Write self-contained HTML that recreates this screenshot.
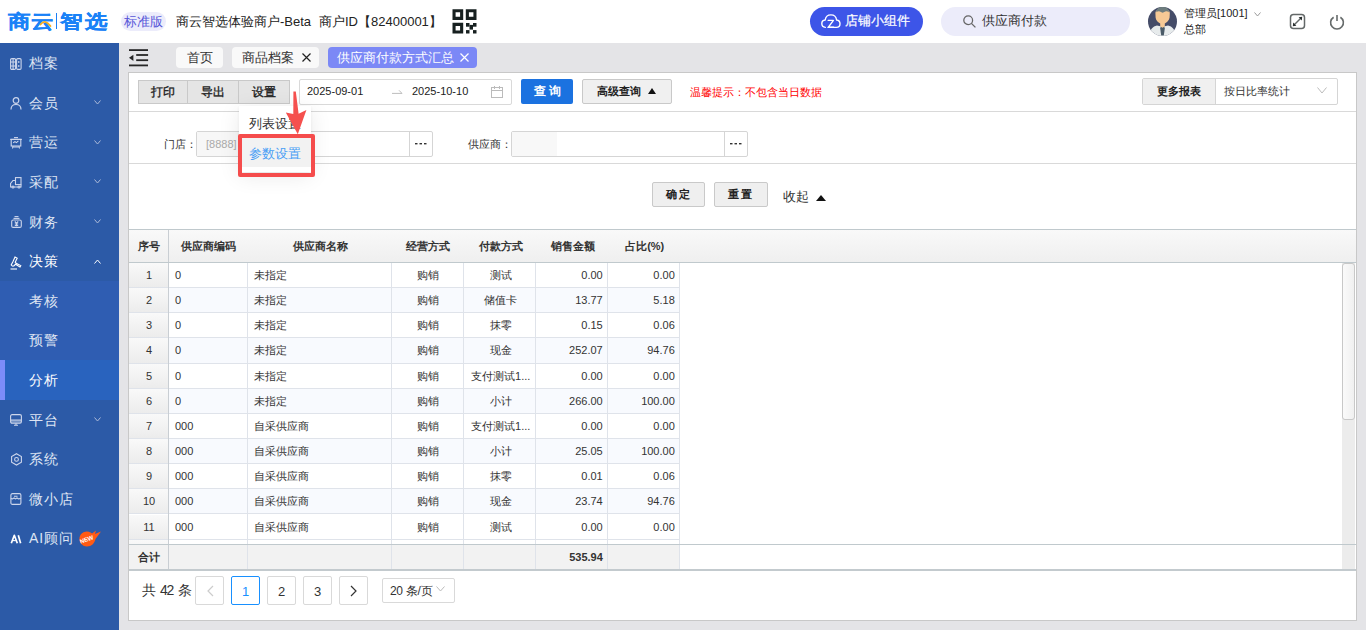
<!DOCTYPE html>
<html><head><meta charset="utf-8">
<style>
*{box-sizing:border-box;margin:0;padding:0}
html,body{width:1366px;height:630px;overflow:hidden;background:#e4e4e7;font-family:"Liberation Sans",sans-serif;color:#333}
.abs{position:absolute}
.logo{top:8.5px;font-size:22px;font-weight:bold;-webkit-text-stroke:0.3px #1a82f7;color:#1a82f7;line-height:30px;transform:scale(1.02,0.86);transform-origin:0 0}
#hdr{position:absolute;left:0;top:0;width:1366px;height:43px;background:#fff}
#side{position:absolute;left:0;top:43px;width:119px;height:587px;background:#2c5aa7}
.mi{position:absolute;left:0;width:119px;height:39.67px;color:#dfe5f3;font-size:14px}
.mi .t{position:absolute;left:29px;top:11.3px;line-height:18px;font-size:14px;letter-spacing:1px}
.mi .ic{position:absolute;left:10px;top:14px;width:12px;height:12px}
.mi .chev{position:absolute;left:94px;top:15px;width:7px;height:5px}
#panel{position:absolute;left:128px;top:72px;width:1229px;height:549px;background:#fff;border:1px solid #c8c8c8}
.tab{position:absolute;top:47px;height:21px;background:#f9f9f9;border-radius:4px;font-size:13px;line-height:21px;color:#333}
.btn{position:absolute;background:#efefef;border:1px solid #c9c9c9;font-size:12px;font-weight:bold;text-align:center;color:#222}
.sep{position:absolute;left:129px;width:1227px;height:1px;background:#d9d9d9}
.th{position:absolute;top:230px;height:32px;line-height:32px;text-align:center;font-size:11px;font-weight:bold;color:#333}
.td{position:absolute;height:24px;line-height:25px;font-size:11px;color:#333;white-space:nowrap;overflow:hidden}
.pg{position:absolute;top:576px;width:29px;height:29px;border:1px solid #d9d9d9;border-radius:2px;text-align:center;line-height:27px;font-size:13px;color:#333;display:flex;align-items:center;justify-content:center;padding-top:1px}
</style></head><body>
<div id="hdr">
  <div class="abs logo" style="left:8px">商</div><div class="abs logo" style="left:31px">云</div>
  <div class="abs" style="left:56px;top:13px;width:1px;height:16px;background:#1a7ff5"></div>
  <svg class="abs" style="left:39px;top:20px" width="13" height="8" viewBox="0 0 13 8"><path d="M1.5 4.6C3 2.6 4.6 1.6 6.4 2C8.2 2.4 9.6 3.6 11.5 6" fill="none" stroke="#f5ad1f" stroke-width="1.7" stroke-linecap="round"/></svg><div class="abs logo" style="left:60px">智</div><div class="abs logo" style="left:85px">选</div>
  <div class="abs" style="left:121px;top:12px;width:45px;height:19px;border-radius:10px;background:#ececfb;color:#5656d8;font-size:13px;line-height:19px;text-align:center">标准版</div>
  <div class="abs" style="left:176px;top:12px;font-size:13px;line-height:19px;color:#222">商云智选体验商户-Beta</div>
  <div class="abs" style="left:319px;top:12px;font-size:13px;line-height:19px;color:#222">商户ID【82400001】</div>
  <svg class="abs" style="left:452px;top:9px" width="25" height="25" viewBox="0 0 25 25"><g fill="#172020" fill-rule="evenodd"><path d="M0.5 0.2h10.7v10.7H0.5zM3.6 3.3v4.5h4.5V3.3z"/><path d="M13.8 0.2h10.7v10.7H13.8zM16.9 3.3v4.5h4.5V3.3z"/><path d="M0.5 13.8h10.7v10.7H0.5zM3.6 16.9v4.5h4.5v-4.5z"/><rect x="14" y="14" width="3.5" height="3.7"/><rect x="21" y="14" width="3.5" height="3.7"/><rect x="17.5" y="15.9" width="3.5" height="4.7"/><rect x="14" y="21.1" width="3.5" height="3.4"/><rect x="21" y="21.1" width="3.5" height="3.4"/></g></svg>
  <div class="abs" style="left:810px;top:7px;width:113px;height:29px;border-radius:15px;background:#3d55e8"></div>
  <div class="abs" style="left:845px;top:11px;font-size:13px;line-height:20px;color:#fff;-webkit-text-stroke:0.2px #fff">店铺小组件</div>
  <div class="abs" style="left:941px;top:7px;width:189px;height:29px;border-radius:15px;background:#ececfa"></div>
  <div class="abs" style="left:982px;top:11px;font-size:13px;line-height:20px;color:#333">供应商付款</div>

  <svg class="abs" style="left:821px;top:14px" width="20" height="15" viewBox="0 0 20 15"><g fill="none" stroke="#fff" stroke-width="1.4" stroke-linecap="round" stroke-linejoin="round"><path d="M4.3 13.4C2 13.2 0.8 11.6 0.8 9.6C0.8 7.6 2.2 6.2 4.2 6C4.6 3 6.9 0.9 9.9 0.9C12.9 0.9 15.2 3 15.6 6C17.6 6.2 19 7.7 19 9.7C19 11.8 17.6 13.4 15.4 13.4H7"/><path d="M7.2 6.4H12.4L7.4 13.2H12.6"/></g></svg>
  <svg class="abs" style="left:963px;top:15px" width="13" height="13" viewBox="0 0 13 13"><g fill="none" stroke="#666" stroke-width="1.3"><circle cx="5.2" cy="5.2" r="4.4"/><path d="M8.4 8.4L12.4 12.4"/></g></svg>
  <svg class="abs" style="left:1148px;top:7px" width="29" height="29" viewBox="0 0 29 29"><defs><clipPath id="av"><circle cx="14.5" cy="14.5" r="14.5"/></clipPath></defs><g clip-path="url(#av)"><rect width="29" height="29" fill="#454c68"/><path d="M1 30C2 22.5 4.5 19.5 9 18.6L14.5 19.8L20 18.6C24.5 19.5 27 22.5 28 30z" fill="#e7ebec"/><path d="M12.8 19.5h3.4l0.6 2l-1 7h-2.6l-1-7z" fill="#4b5b68"/><path d="M7.4 6C7.6 3.2 10.5 1.8 14.6 1.8S21.6 3.2 21.8 6L21.6 10.5C21.2 13.5 18.8 15.5 16.8 16.5V19.6L14.5 20.8L12.2 19.6V16.5C10.2 15.5 7.8 13.5 7.6 10.5z" fill="#f6c995"/><path d="M8.2 5.2C8.5 1.5 11 -0.5 14.6 -0.5S20.7 1.5 21 5.2C19.5 4 17.5 3.8 16.3 4.9L14.6 5.8L12.9 4.9C11.7 3.8 9.7 4 8.2 5.2z" fill="#6e7d7e"/></g></svg>
  <svg class="abs" style="left:1254px;top:12px" width="7" height="5" viewBox="0 0 7 5"><path d="M0.5 0.5L3.5 4L6.5 0.5" fill="none" stroke="#999" stroke-width="1"/></svg>
  <svg class="abs" style="left:1289px;top:13px" width="17" height="17" viewBox="0 0 17 17"><g fill="none" stroke="#636868" stroke-width="1.5"><rect x="1.5" y="1.5" width="14" height="14" rx="3"/><path d="M5 12L12 5"/></g><path d="M3.8 13.2L4.2 9.6L7.4 12.8z M13.2 3.8L12.8 7.4L9.6 4.2z" fill="#2a3030"/></svg>
  <svg class="abs" style="left:1329px;top:14px" width="16" height="16" viewBox="0 0 16 16"><g fill="none" stroke="#666b6b" stroke-width="1.6"><path d="M4.6 3.2A6.4 6.4 0 1 0 11.4 3.2"/><path d="M8 1v6"/></g></svg>
  <div class="abs" style="left:1184px;top:6px;font-size:11px;line-height:14px;color:#222">管理员[1001]</div>
  <div class="abs" style="left:1184px;top:22px;font-size:11px;line-height:14px;color:#222">总部</div>
</div>
<div id="side">
  <div class="mi" style="top:0.00px"><span class="t">档案</span></div>
  <div class="mi" style="top:39.60px"><span class="t">会员</span></div>
  <div class="mi" style="top:79.20px"><span class="t">营运</span></div>
  <div class="mi" style="top:118.80px"><span class="t">采配</span></div>
  <div class="mi" style="top:158.40px"><span class="t">财务</span></div>
  <div class="mi" style="top:198.00px;color:#fff"><span class="t">决策</span></div>
  <div class="abs" style="left:0;top:238px;width:119px;height:119px;background:#2f5db2"></div>
  <div class="mi" style="top:237.60px"><span class="t">考核</span></div>
  <div class="mi" style="top:277.20px"><span class="t">预警</span></div>
  <div class="abs" style="left:0;top:317px;width:119px;height:40px;background:#2963be"></div>
  <div class="abs" style="left:0;top:317px;width:5px;height:40px;background:#7c8cf8"></div>
  <div class="mi" style="top:316.80px;color:#fff"><span class="t">分析</span></div>
  <div class="mi" style="top:356.40px"><span class="t">平台</span></div>
  <div class="mi" style="top:396.00px"><span class="t">系统</span></div>
  <div class="mi" style="top:435.60px"><span class="t">微小店</span></div>
  <div class="mi" style="top:475.20px"><span class="t">AI顾问</span></div>

<svg class="abs" style="left:10px;top:14.5px" width="12" height="12" viewBox="0 0 12 12"><g fill="none" stroke="#cdd6ec" stroke-width="1.1"><rect x="0.6" y="0.6" width="5" height="10.8" rx="1.2"/><rect x="6.6" y="0.6" width="4.5" height="10.8" rx="1.2"/><path d="M3.1 1v10M0.6 4h5M0.6 8h5M8.8 3v2M8.8 7v2"/></g></svg>
<svg class="abs" style="left:10px;top:54px" width="12" height="13" viewBox="0 0 12 13"><g fill="none" stroke="#cdd6ec" stroke-width="1.2"><circle cx="6" cy="3.5" r="2.8"/><path d="M1 12.5C1 9.3 3.2 7.5 6 7.5S11 9.3 11 12.5"/></g></svg>
<svg class="abs" style="left:10px;top:94px" width="12" height="12" viewBox="0 0 12 12"><g fill="none" stroke="#cdd6ec" stroke-width="1.1"><path d="M4 0.6h4"/><path d="M0.2 2.4h11.6"/><rect x="1.2" y="2.4" width="9.6" height="6.6"/><path d="M3.2 5.8L5 4.6L6.4 5.6L8.4 3.8"/><path d="M2.5 11.5L3 9M9.5 11.5L9 9M3 10h6"/></g></svg>
<svg class="abs" style="left:10px;top:133.5px" width="12" height="12" viewBox="0 0 12 12"><g fill="none" stroke="#cdd6ec" stroke-width="1.1"><rect x="5.5" y="0.6" width="5.5" height="7"/><path d="M5.5 3.5H3L0.6 6.5V10h1.5M4 10h4M10 10h1V7.6"/><circle cx="3" cy="10" r="1"/><circle cx="9" cy="10" r="1"/></g></svg>
<svg class="abs" style="left:10.5px;top:173px" width="11" height="12" viewBox="0 0 11 12"><g fill="none" stroke="#cdd6ec" stroke-width="1.1"><path d="M3.5 0.6h4"/><path d="M2.5 2.4h6"/><rect x="0.7" y="4" width="9.6" height="7.4" rx="1.5"/><path d="M3.8 5.5L5.5 7.3L7.2 5.5M5.5 7.3v3M3.8 8h3.4M3.8 9.5h3.4"/></g></svg>
<svg class="abs" style="left:10px;top:212.5px" width="12" height="14" viewBox="0 0 12 14"><g fill="none" stroke="#fff" stroke-width="1.1"><path d="M5 1L7.2 2.2L5.2 6.2L6.2 7.2L10.8 9.6L10 11L5.5 8.3L4 9.7C3 10.4 2 10 1.2 9L3 5.5z"/><path d="M0.5 13h6.5"/></g></svg>
<svg class="abs" style="left:10px;top:371px" width="12" height="12" viewBox="0 0 12 12"><g fill="none" stroke="#cdd6ec" stroke-width="1.1"><rect x="0.6" y="0.6" width="10.8" height="8.6" rx="1.5"/><path d="M1 6h10M4 11.2h4M6 9.2v2"/></g><rect x="1" y="6" width="10" height="3" fill="#cdd6ec" opacity="0.45"/></svg>
<svg class="abs" style="left:10.5px;top:409.5px" width="12" height="13" viewBox="0 0 12 13"><g fill="none" stroke="#cdd6ec" stroke-width="1.1"><path d="M5.5 0.7L10.4 3.5V9.3L5.5 12.1L0.6 9.3V3.5z"/><circle cx="5.5" cy="6.4" r="1.9"/></g></svg>
<svg class="abs" style="left:10px;top:450px" width="12" height="12" viewBox="0 0 12 12"><g fill="none" stroke="#cdd6ec" stroke-width="1.1"><rect x="0.9" y="0.6" width="10" height="10.8" rx="1.5"/><path d="M4 3.2h3.5M0.8 5.5L2.5 5.9L4 5L5.5 5.9L7 5L8.5 5.9L11 5.5"/></g></svg>
<svg class="abs" style="left:10px;top:491px" width="12" height="10" viewBox="0 0 12 10"><g fill="none" stroke="#fff" stroke-width="1.7" stroke-linejoin="round"><path d="M1.3 9.2L4.3 1.3L7.3 9.2"/><path d="M8.3 1.3L10.6 9.2"/></g><path d="M2.8 6.6H5.8" stroke="#fff" stroke-width="1.1"/></svg>
<svg class="abs" style="left:78.5px;top:486.5px" width="23" height="17" viewBox="0 0 23 17"><path d="M8 16.5A7.5 7.5 0 1 1 13 3.5L17 0.5L16 4L22 1.5L16.5 9C15.5 13.5 12.5 16.5 8 16.5z" fill="#ff5a14"/><text x="7.5" y="11.5" font-size="6" font-weight="bold" fill="#fff" text-anchor="middle" transform="rotate(-20 7.5 9)" font-family="Liberation Sans">NEW</text></svg>
<svg class="abs" style="left:94px;top:57px" width="7" height="5" viewBox="0 0 7 5"><path d="M0.5 0.5L3.5 4L6.5 0.5" fill="none" stroke="#aab8d8" stroke-width="1"/></svg><svg class="abs" style="left:94px;top:97px" width="7" height="5" viewBox="0 0 7 5"><path d="M0.5 0.5L3.5 4L6.5 0.5" fill="none" stroke="#aab8d8" stroke-width="1"/></svg><svg class="abs" style="left:94px;top:136px" width="7" height="5" viewBox="0 0 7 5"><path d="M0.5 0.5L3.5 4L6.5 0.5" fill="none" stroke="#aab8d8" stroke-width="1"/></svg><svg class="abs" style="left:94px;top:176px" width="7" height="5" viewBox="0 0 7 5"><path d="M0.5 0.5L3.5 4L6.5 0.5" fill="none" stroke="#aab8d8" stroke-width="1"/></svg><svg class="abs" style="left:94px;top:216px" width="7" height="5" viewBox="0 0 7 5"><path d="M0.5 4.5L3.5 1L6.5 4.5" fill="none" stroke="#fff" stroke-width="1"/></svg><svg class="abs" style="left:94px;top:374px" width="7" height="5" viewBox="0 0 7 5"><path d="M0.5 0.5L3.5 4L6.5 0.5" fill="none" stroke="#aab8d8" stroke-width="1"/></svg>
</div>
<div class="tab" style="left:176px;width:47px;text-align:center">首页</div>
<div class="tab" style="left:232px;width:87px;padding-left:10px">商品档案<svg style="position:absolute;right:8px;top:6px" width="9" height="9" viewBox="0 0 9 9"><path d="M0.5 0.5L8.5 8.5M8.5 0.5L0.5 8.5" stroke="#222" stroke-width="1.2"/></svg></div>
<div class="tab" style="left:328px;width:149px;padding-left:9px;background:#7b88f6;color:#fff">供应商付款方式汇总<svg style="position:absolute;right:8px;top:6px" width="9" height="9" viewBox="0 0 9 9"><path d="M0.5 0.5L8.5 8.5M8.5 0.5L0.5 8.5" stroke="#fff" stroke-width="1.2"/></svg></div>
<div id="panel"></div>
<!-- toolbar -->
<div class="abs" style="left:129px;top:48px;width:20px;height:19px">
 <svg width="20" height="19" viewBox="0 0 20 19"><g fill="#262626"><rect x="0" y="1.2" width="19" height="1.8"/><rect x="7.2" y="6.1" width="11.9" height="1.8"/><rect x="7.2" y="11.3" width="11.9" height="1.8"/><rect x="0" y="16.5" width="19" height="1.8"/><path d="M0 9.8L4.4 6.7V13z"/></g></svg>
</div>
<div class="btn" style="left:138px;top:80px;width:50px;height:24px;line-height:22px;background:#e5e5e5;font-size:11.5px;font-weight:normal;-webkit-text-stroke:0.35px #222">打印</div>
<div class="btn" style="left:187px;top:80px;width:52px;height:24px;line-height:22px;background:#e5e5e5;font-size:11.5px;font-weight:normal;-webkit-text-stroke:0.35px #222">导出</div>
<div class="btn" style="left:238px;top:80px;width:52px;height:24px;line-height:22px;background:#e5e5e5;font-size:11.5px;font-weight:normal;-webkit-text-stroke:0.35px #222">设置</div>
<div class="abs" style="left:299px;top:79px;width:213px;height:26px;border:1px solid #d9d9d9;border-radius:2px;background:#fff"></div>
<div class="abs" style="left:307px;top:85px;font-size:11px;line-height:13px;color:#222">2025-09-01</div>
<svg class="abs" style="left:391px;top:89px" width="12" height="6" viewBox="0 0 12 6"><path d="M1 4.4H11L8 1.3" fill="none" stroke="#bdbdbd" stroke-width="1"/></svg>
<div class="abs" style="left:412px;top:85px;font-size:11px;line-height:13px;color:#222">2025-10-10</div>
<svg class="abs" style="left:491px;top:86px" width="12" height="12" viewBox="0 0 12 12"><g fill="none" stroke="#bbb" stroke-width="1"><rect x="0.5" y="1.5" width="11" height="10"/><path d="M0.5 4.5h11M3.5 0v3M8.5 0v3"/></g></svg>
<div class="abs" style="left:521px;top:79px;width:52px;height:25px;background:#1b72e0;border-radius:2px;color:#fff;font-size:12px;font-weight:bold;line-height:25px;text-align:center;letter-spacing:3px;padding-left:3px">查询</div>
<div class="btn" style="left:582px;top:79px;width:90px;height:25px;line-height:23px;text-align:left;padding-left:14px;font-size:11px;border-radius:2px;background:#f0f0f0">高级查询</div>
<svg class="abs" style="left:648px;top:88px" width="8" height="6" viewBox="0 0 8 6"><path d="M0 6L4 0L8 6z" fill="#111"/></svg>
<div class="abs" style="left:690px;top:85px;font-size:11px;line-height:14px;color:#f00">温馨提示：不包含当日数据</div>
<div class="abs" style="left:1142px;top:78px;width:196px;height:27px;border:1px solid #d5d5d5;border-radius:2px;background:#fff"></div>
<div class="abs" style="left:1143px;top:79px;width:73px;height:25px;background:#f0f0f0;border-right:1px solid #d5d5d5"></div>
<div class="abs" style="left:1157px;top:84px;font-size:11px;font-weight:bold;line-height:14px;color:#222">更多报表</div>
<div class="abs" style="left:1224px;top:84px;font-size:11px;line-height:14px;color:#333">按日比率统计</div>
<svg class="abs" style="left:1317px;top:87px" width="10" height="7" viewBox="0 0 10 7"><path d="M0.5 0.5L5 6L9.5 0.5" fill="none" stroke="#bbb" stroke-width="1"/></svg>
<div class="sep" style="top:111px"></div>
<!-- filter row -->
<div class="abs" style="left:164px;top:137px;font-size:11px;line-height:14px;color:#333">门店：</div>
<div class="abs" style="left:196px;top:131px;width:237px;height:26px;border:1px solid #d5d5d5;border-radius:2px;background:#fff"></div>
<div class="abs" style="left:197px;top:132px;width:46px;height:24px;background:#f7f7f7"></div>
<div class="abs" style="left:409px;top:132px;width:1px;height:24px;background:#d5d5d5"></div>
<div class="abs" style="left:206px;top:137px;font-size:11px;line-height:14px;color:#aaa">[8888]</div>
<svg class="abs" style="left:415px;top:143px" width="12" height="2" viewBox="0 0 12 2"><g fill="#333"><rect x="0" y="0" width="2.5" height="1.4"/><rect x="4.5" y="0" width="2.5" height="1.4"/><rect x="9" y="0" width="2.5" height="1.4"/></g></svg>
<div class="abs" style="left:468px;top:137px;font-size:11px;line-height:14px;color:#333">供应商：</div>
<div class="abs" style="left:511px;top:131px;width:237px;height:26px;border:1px solid #d5d5d5;border-radius:2px;background:#fff"></div>
<div class="abs" style="left:512px;top:132px;width:45px;height:24px;background:#f8f8f8"></div>
<div class="abs" style="left:724px;top:132px;width:1px;height:24px;background:#d5d5d5"></div>
<svg class="abs" style="left:730px;top:143px" width="12" height="2" viewBox="0 0 12 2"><g fill="#333"><rect x="0" y="0" width="2.5" height="1.4"/><rect x="4.5" y="0" width="2.5" height="1.4"/><rect x="9" y="0" width="2.5" height="1.4"/></g></svg>
<div class="sep" style="top:163px"></div>
<div class="btn" style="left:652px;top:182px;width:53px;height:25px;line-height:23px;font-size:11px;border-radius:2px;letter-spacing:2px">确定</div>
<div class="btn" style="left:714px;top:182px;width:54px;height:25px;line-height:23px;font-size:11px;border-radius:2px;letter-spacing:2px">重置</div>
<div class="abs" style="left:783px;top:188px;font-size:13px;line-height:17px;color:#333">收起</div>
<svg class="abs" style="left:816px;top:195px" width="10" height="6" viewBox="0 0 10 6"><path d="M0 6L5 0L10 6z" fill="#111"/></svg>
<!-- table start -->
<!-- table start -->
<!-- table start -->
<!-- table start -->
<!-- table start -->
<!-- table start -->
<div class="abs" style="left:129px;top:229px;width:1227px;height:34px;background:linear-gradient(#f9f9f9,#efefef);border-top:1px solid #c0c9cd;border-bottom:1px solid #c0c9cd"></div>
<div class="abs" style="left:168px;top:230px;width:1px;height:32px;background:#c9ced3"></div>
<div class="th" style="left:129px;width:39.0px;padding-left:1px">序号</div>
<div class="th" style="left:168px;width:79.0px;padding-left:2px">供应商编码</div>
<div class="th" style="left:247px;width:144.0px;padding-left:2px">供应商名称</div>
<div class="th" style="left:391px;width:72.6px;padding-left:2px">经营方式</div>
<div class="th" style="left:463.6px;width:72.2px;padding-left:2px">付款方式</div>
<div class="th" style="left:535.8px;width:71.9px;padding-left:2px">销售金额</div>
<div class="th" style="left:607.7px;width:72.1px;padding-left:2px">占比(%)</div>
<div class="abs" style="left:129px;top:263px;width:1227px;height:281px;overflow:hidden">
<div class="abs" style="left:0;top:0.00px;width:550.8px;height:25.15px;background:#fff;border-bottom:1px solid #dfe3ea"></div>
<div class="abs" style="left:0;top:0.00px;width:39px;height:24.15px;background:linear-gradient(#f9f9f9,#ececec)"></div>
<div class="td" style="left:0.0px;top:0.00px;width:39.0px;text-align:center;padding-left:1px;">1</div>
<div class="td" style="left:39.0px;top:0.00px;width:79.0px;text-align:left;padding-left:7px;">0</div>
<div class="td" style="left:118.0px;top:0.00px;width:144.0px;text-align:left;padding-left:7px;">未指定</div>
<div class="td" style="left:262.0px;top:0.00px;width:72.6px;text-align:center;padding-left:2px;">购销</div>
<div class="td" style="left:334.6px;top:0.00px;width:72.2px;text-align:center;padding-left:2px;">测试</div>
<div class="td" style="left:406.8px;top:0.00px;width:71.9px;text-align:right;padding-right:5px;">0.00</div>
<div class="td" style="left:478.7px;top:0.00px;width:72.1px;text-align:right;padding-right:5px;">0.00</div>
<div class="abs" style="left:0;top:25.15px;width:550.8px;height:25.15px;background:#f8fafe;border-bottom:1px solid #dfe3ea"></div>
<div class="abs" style="left:0;top:25.15px;width:39px;height:24.15px;background:linear-gradient(#f9f9f9,#ececec)"></div>
<div class="td" style="left:0.0px;top:25.15px;width:39.0px;text-align:center;padding-left:1px;">2</div>
<div class="td" style="left:39.0px;top:25.15px;width:79.0px;text-align:left;padding-left:7px;">0</div>
<div class="td" style="left:118.0px;top:25.15px;width:144.0px;text-align:left;padding-left:7px;">未指定</div>
<div class="td" style="left:262.0px;top:25.15px;width:72.6px;text-align:center;padding-left:2px;">购销</div>
<div class="td" style="left:334.6px;top:25.15px;width:72.2px;text-align:center;padding-left:2px;">储值卡</div>
<div class="td" style="left:406.8px;top:25.15px;width:71.9px;text-align:right;padding-right:5px;">13.77</div>
<div class="td" style="left:478.7px;top:25.15px;width:72.1px;text-align:right;padding-right:5px;">5.18</div>
<div class="abs" style="left:0;top:50.30px;width:550.8px;height:25.15px;background:#fff;border-bottom:1px solid #dfe3ea"></div>
<div class="abs" style="left:0;top:50.30px;width:39px;height:24.15px;background:linear-gradient(#f9f9f9,#ececec)"></div>
<div class="td" style="left:0.0px;top:50.30px;width:39.0px;text-align:center;padding-left:1px;">3</div>
<div class="td" style="left:39.0px;top:50.30px;width:79.0px;text-align:left;padding-left:7px;">0</div>
<div class="td" style="left:118.0px;top:50.30px;width:144.0px;text-align:left;padding-left:7px;">未指定</div>
<div class="td" style="left:262.0px;top:50.30px;width:72.6px;text-align:center;padding-left:2px;">购销</div>
<div class="td" style="left:334.6px;top:50.30px;width:72.2px;text-align:center;padding-left:2px;">抹零</div>
<div class="td" style="left:406.8px;top:50.30px;width:71.9px;text-align:right;padding-right:5px;">0.15</div>
<div class="td" style="left:478.7px;top:50.30px;width:72.1px;text-align:right;padding-right:5px;">0.06</div>
<div class="abs" style="left:0;top:75.45px;width:550.8px;height:25.15px;background:#f8fafe;border-bottom:1px solid #dfe3ea"></div>
<div class="abs" style="left:0;top:75.45px;width:39px;height:24.15px;background:linear-gradient(#f9f9f9,#ececec)"></div>
<div class="td" style="left:0.0px;top:75.45px;width:39.0px;text-align:center;padding-left:1px;">4</div>
<div class="td" style="left:39.0px;top:75.45px;width:79.0px;text-align:left;padding-left:7px;">0</div>
<div class="td" style="left:118.0px;top:75.45px;width:144.0px;text-align:left;padding-left:7px;">未指定</div>
<div class="td" style="left:262.0px;top:75.45px;width:72.6px;text-align:center;padding-left:2px;">购销</div>
<div class="td" style="left:334.6px;top:75.45px;width:72.2px;text-align:center;padding-left:2px;">现金</div>
<div class="td" style="left:406.8px;top:75.45px;width:71.9px;text-align:right;padding-right:5px;">252.07</div>
<div class="td" style="left:478.7px;top:75.45px;width:72.1px;text-align:right;padding-right:5px;">94.76</div>
<div class="abs" style="left:0;top:100.60px;width:550.8px;height:25.15px;background:#fff;border-bottom:1px solid #dfe3ea"></div>
<div class="abs" style="left:0;top:100.60px;width:39px;height:24.15px;background:linear-gradient(#f9f9f9,#ececec)"></div>
<div class="td" style="left:0.0px;top:100.60px;width:39.0px;text-align:center;padding-left:1px;">5</div>
<div class="td" style="left:39.0px;top:100.60px;width:79.0px;text-align:left;padding-left:7px;">0</div>
<div class="td" style="left:118.0px;top:100.60px;width:144.0px;text-align:left;padding-left:7px;">未指定</div>
<div class="td" style="left:262.0px;top:100.60px;width:72.6px;text-align:center;padding-left:2px;">购销</div>
<div class="td" style="left:334.6px;top:100.60px;width:72.2px;text-align:center;padding-left:2px;">支付测试1...</div>
<div class="td" style="left:406.8px;top:100.60px;width:71.9px;text-align:right;padding-right:5px;">0.00</div>
<div class="td" style="left:478.7px;top:100.60px;width:72.1px;text-align:right;padding-right:5px;">0.00</div>
<div class="abs" style="left:0;top:125.75px;width:550.8px;height:25.15px;background:#f8fafe;border-bottom:1px solid #dfe3ea"></div>
<div class="abs" style="left:0;top:125.75px;width:39px;height:24.15px;background:linear-gradient(#f9f9f9,#ececec)"></div>
<div class="td" style="left:0.0px;top:125.75px;width:39.0px;text-align:center;padding-left:1px;">6</div>
<div class="td" style="left:39.0px;top:125.75px;width:79.0px;text-align:left;padding-left:7px;">0</div>
<div class="td" style="left:118.0px;top:125.75px;width:144.0px;text-align:left;padding-left:7px;">未指定</div>
<div class="td" style="left:262.0px;top:125.75px;width:72.6px;text-align:center;padding-left:2px;">购销</div>
<div class="td" style="left:334.6px;top:125.75px;width:72.2px;text-align:center;padding-left:2px;">小计</div>
<div class="td" style="left:406.8px;top:125.75px;width:71.9px;text-align:right;padding-right:5px;">266.00</div>
<div class="td" style="left:478.7px;top:125.75px;width:72.1px;text-align:right;padding-right:5px;">100.00</div>
<div class="abs" style="left:0;top:150.90px;width:550.8px;height:25.15px;background:#fff;border-bottom:1px solid #dfe3ea"></div>
<div class="abs" style="left:0;top:150.90px;width:39px;height:24.15px;background:linear-gradient(#f9f9f9,#ececec)"></div>
<div class="td" style="left:0.0px;top:150.90px;width:39.0px;text-align:center;padding-left:1px;">7</div>
<div class="td" style="left:39.0px;top:150.90px;width:79.0px;text-align:left;padding-left:7px;">000</div>
<div class="td" style="left:118.0px;top:150.90px;width:144.0px;text-align:left;padding-left:7px;">自采供应商</div>
<div class="td" style="left:262.0px;top:150.90px;width:72.6px;text-align:center;padding-left:2px;">购销</div>
<div class="td" style="left:334.6px;top:150.90px;width:72.2px;text-align:center;padding-left:2px;">支付测试1...</div>
<div class="td" style="left:406.8px;top:150.90px;width:71.9px;text-align:right;padding-right:5px;">0.00</div>
<div class="td" style="left:478.7px;top:150.90px;width:72.1px;text-align:right;padding-right:5px;">0.00</div>
<div class="abs" style="left:0;top:176.05px;width:550.8px;height:25.15px;background:#f8fafe;border-bottom:1px solid #dfe3ea"></div>
<div class="abs" style="left:0;top:176.05px;width:39px;height:24.15px;background:linear-gradient(#f9f9f9,#ececec)"></div>
<div class="td" style="left:0.0px;top:176.05px;width:39.0px;text-align:center;padding-left:1px;">8</div>
<div class="td" style="left:39.0px;top:176.05px;width:79.0px;text-align:left;padding-left:7px;">000</div>
<div class="td" style="left:118.0px;top:176.05px;width:144.0px;text-align:left;padding-left:7px;">自采供应商</div>
<div class="td" style="left:262.0px;top:176.05px;width:72.6px;text-align:center;padding-left:2px;">购销</div>
<div class="td" style="left:334.6px;top:176.05px;width:72.2px;text-align:center;padding-left:2px;">小计</div>
<div class="td" style="left:406.8px;top:176.05px;width:71.9px;text-align:right;padding-right:5px;">25.05</div>
<div class="td" style="left:478.7px;top:176.05px;width:72.1px;text-align:right;padding-right:5px;">100.00</div>
<div class="abs" style="left:0;top:201.20px;width:550.8px;height:25.15px;background:#fff;border-bottom:1px solid #dfe3ea"></div>
<div class="abs" style="left:0;top:201.20px;width:39px;height:24.15px;background:linear-gradient(#f9f9f9,#ececec)"></div>
<div class="td" style="left:0.0px;top:201.20px;width:39.0px;text-align:center;padding-left:1px;">9</div>
<div class="td" style="left:39.0px;top:201.20px;width:79.0px;text-align:left;padding-left:7px;">000</div>
<div class="td" style="left:118.0px;top:201.20px;width:144.0px;text-align:left;padding-left:7px;">自采供应商</div>
<div class="td" style="left:262.0px;top:201.20px;width:72.6px;text-align:center;padding-left:2px;">购销</div>
<div class="td" style="left:334.6px;top:201.20px;width:72.2px;text-align:center;padding-left:2px;">抹零</div>
<div class="td" style="left:406.8px;top:201.20px;width:71.9px;text-align:right;padding-right:5px;">0.01</div>
<div class="td" style="left:478.7px;top:201.20px;width:72.1px;text-align:right;padding-right:5px;">0.06</div>
<div class="abs" style="left:0;top:226.35px;width:550.8px;height:25.15px;background:#f8fafe;border-bottom:1px solid #dfe3ea"></div>
<div class="abs" style="left:0;top:226.35px;width:39px;height:24.15px;background:linear-gradient(#f9f9f9,#ececec)"></div>
<div class="td" style="left:0.0px;top:226.35px;width:39.0px;text-align:center;padding-left:1px;">10</div>
<div class="td" style="left:39.0px;top:226.35px;width:79.0px;text-align:left;padding-left:7px;">000</div>
<div class="td" style="left:118.0px;top:226.35px;width:144.0px;text-align:left;padding-left:7px;">自采供应商</div>
<div class="td" style="left:262.0px;top:226.35px;width:72.6px;text-align:center;padding-left:2px;">购销</div>
<div class="td" style="left:334.6px;top:226.35px;width:72.2px;text-align:center;padding-left:2px;">现金</div>
<div class="td" style="left:406.8px;top:226.35px;width:71.9px;text-align:right;padding-right:5px;">23.74</div>
<div class="td" style="left:478.7px;top:226.35px;width:72.1px;text-align:right;padding-right:5px;">94.76</div>
<div class="abs" style="left:0;top:251.50px;width:550.8px;height:25.15px;background:#fff;border-bottom:1px solid #dfe3ea"></div>
<div class="abs" style="left:0;top:251.50px;width:39px;height:24.15px;background:linear-gradient(#f9f9f9,#ececec)"></div>
<div class="td" style="left:0.0px;top:251.50px;width:39.0px;text-align:center;padding-left:1px;">11</div>
<div class="td" style="left:39.0px;top:251.50px;width:79.0px;text-align:left;padding-left:7px;">000</div>
<div class="td" style="left:118.0px;top:251.50px;width:144.0px;text-align:left;padding-left:7px;">自采供应商</div>
<div class="td" style="left:262.0px;top:251.50px;width:72.6px;text-align:center;padding-left:2px;">购销</div>
<div class="td" style="left:334.6px;top:251.50px;width:72.2px;text-align:center;padding-left:2px;">测试</div>
<div class="td" style="left:406.8px;top:251.50px;width:71.9px;text-align:right;padding-right:5px;">0.00</div>
<div class="td" style="left:478.7px;top:251.50px;width:72.1px;text-align:right;padding-right:5px;">0.00</div>
<div class="abs" style="left:0;top:276.65px;width:550.8px;height:25.15px;background:#fff;border-bottom:1px solid #dfe3ea"></div>
<div class="abs" style="left:0;top:276.65px;width:39px;height:24.15px;background:linear-gradient(#f9f9f9,#ececec)"></div>
<div class="td" style="left:0.0px;top:276.65px;width:39.0px;text-align:center;padding-left:1px;">12</div>
<div class="td" style="left:39.0px;top:276.65px;width:79.0px;text-align:left;padding-left:7px;">000</div>
<div class="td" style="left:118.0px;top:276.65px;width:144.0px;text-align:left;padding-left:7px;">自采供应商</div>
<div class="td" style="left:262.0px;top:276.65px;width:72.6px;text-align:center;padding-left:2px;">购销</div>
<div class="td" style="left:334.6px;top:276.65px;width:72.2px;text-align:center;padding-left:2px;">储值卡</div>
<div class="td" style="left:406.8px;top:276.65px;width:71.9px;text-align:right;padding-right:5px;">0.00</div>
<div class="td" style="left:478.7px;top:276.65px;width:72.1px;text-align:right;padding-right:5px;">0.00</div>
<div class="abs" style="left:38.5px;top:0;width:1px;height:281px;background:#dfe3ea"></div>
<div class="abs" style="left:117.5px;top:0;width:1px;height:281px;background:#dfe3ea"></div>
<div class="abs" style="left:261.5px;top:0;width:1px;height:281px;background:#dfe3ea"></div>
<div class="abs" style="left:334.1px;top:0;width:1px;height:281px;background:#dfe3ea"></div>
<div class="abs" style="left:406.3px;top:0;width:1px;height:281px;background:#dfe3ea"></div>
<div class="abs" style="left:478.2px;top:0;width:1px;height:281px;background:#dfe3ea"></div>
<div class="abs" style="left:550.3px;top:0;width:1px;height:281px;background:#dfe3ea"></div>
<div class="abs" style="left:39px;top:0;width:1px;height:281px;background:#c9ced3"></div>
</div>
<div class="abs" style="left:1342px;top:263px;width:13px;height:308px;background:#ececec"></div>
<div class="abs" style="left:1342px;top:263px;width:13px;height:157px;background:linear-gradient(90deg,#fafafa,#f0f0f0);border:1px solid #c8c8c8;border-radius:3px"></div>
<div class="abs" style="left:129px;top:544px;width:1227px;height:27px;border-top:1px solid #c0c9cd;border-bottom:2px solid #c3cace"></div>
<div class="abs" style="left:129px;top:545px;width:551px;height:24px;background:#f2f2f2"></div>
<div class="abs" style="left:168px;top:545px;width:1px;height:24px;background:#c9ced3"></div>
<div class="abs" style="left:246.5px;top:545px;width:1px;height:24px;background:#dfe3ea"></div>
<div class="abs" style="left:390.5px;top:545px;width:1px;height:24px;background:#dfe3ea"></div>
<div class="abs" style="left:463.1px;top:545px;width:1px;height:24px;background:#dfe3ea"></div>
<div class="abs" style="left:535.3px;top:545px;width:1px;height:24px;background:#dfe3ea"></div>
<div class="abs" style="left:607.2px;top:545px;width:1px;height:24px;background:#dfe3ea"></div>
<div class="abs" style="left:679.3px;top:545px;width:1px;height:24px;background:#dfe3ea"></div>
<div class="th" style="left:129px;top:545px;width:39px;height:24px;line-height:24px">合计</div>
<div class="th" style="left:535.8px;top:545px;width:72px;height:24px;line-height:24px;text-align:right;padding-right:5px">535.94</div>
<div class="abs" style="left:142px;top:582px;font-size:14px;line-height:17px;color:#333">共<span style="margin:0 5px 0 4px;letter-spacing:-1.2px">42</span>条</div>
<div class="pg" style="left:195px;"><svg width="8" height="12" viewBox="0 0 8 12"><path d="M7 1L2 6L7 11" fill="none" stroke="#ccc" stroke-width="1.2"/></svg></div>
<div class="pg" style="left:231px;border-color:#1890ff;color:#1890ff;">1</div>
<div class="pg" style="left:267px;">2</div>
<div class="pg" style="left:303px;">3</div>
<div class="pg" style="left:339px;"><svg width="8" height="12" viewBox="0 0 8 12"><path d="M1 1L6 6L1 11" fill="none" stroke="#333" stroke-width="1.2"/></svg></div>
<div class="abs" style="left:382px;top:578px;width:73px;height:25px;border:1px solid #d9d9d9;border-radius:2px"></div>
<div class="abs" style="left:390px;top:584px;font-size:12px;line-height:15px;color:#333;letter-spacing:-0.3px">20 条/页</div>
<svg class="abs" style="left:436px;top:586px" width="9" height="6" viewBox="0 0 9 6"><path d="M0.5 0.5L4.5 5L8.5 0.5" fill="none" stroke="#bbb" stroke-width="1"/></svg>
<!-- dropdown -->
<div class="abs" style="left:239px;top:106px;width:72px;height:66px;background:#fff;box-shadow:0 4px 22px rgba(0,0,0,.09),0 1px 3px rgba(0,0,0,.06)"></div>
<div class="abs" style="left:249px;top:115px;font-size:13px;line-height:17px;color:#333">列表设置</div>
<div class="abs" style="left:239px;top:138px;width:72px;height:29px;background:#f2f2f2"></div>
<div class="abs" style="left:249px;top:144.5px;font-size:13px;line-height:17px;color:#4a9ff5">参数设置</div>
<div class="abs" style="left:238px;top:134px;width:77px;height:43px;border:4px solid #f54c4c;border-radius:2px"></div>
<svg class="abs" style="left:280px;top:88px" width="30" height="48" viewBox="0 0 30 48"><path d="M13.4 3.6L15.8 3.6L18.6 25.8L26.4 22L17.8 46.2L5.8 24.4L13.3 26z" fill="#f5504e"/></svg>

</body></html>
